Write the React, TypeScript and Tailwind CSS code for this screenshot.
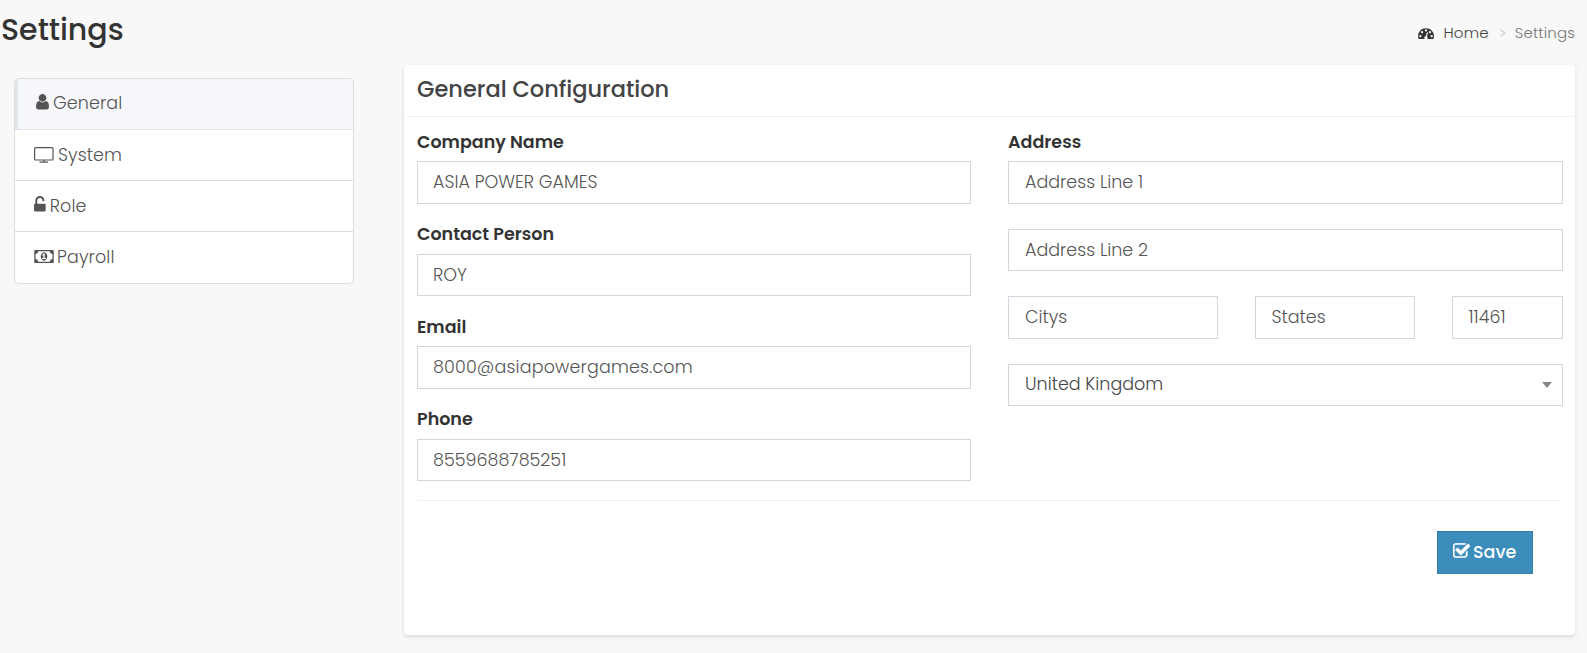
import type { ReactNode } from "react";

function Glyph({ d, vb, className }: { d: string; vb: string; className: string }) {
  return (
    <svg viewBox={vb} className={className} fill="currentColor" aria-hidden="true">
      <path d={d} />
    </svg>
  );
}

const USER =
  "M1536 1399q0 109-62.5 187t-150.5 78h-854q-88 0-150.5-78t-62.5-187q0-85 8.5-160.5t31.5-152 58.5-131 94-89 134.5-34.5q131 128 313 128t313-128q76 0 134.5 34.5t94 89 58.5 131 31.5 152 8.5 160.5zm-256-887q0 159-112.5 271.5t-271.5 112.5-271.5-112.5-112.5-271.5 112.5-271.5 271.5-112.5 271.5 112.5 112.5 271.5z";
const UNLOCK =
  "M1376 768q40 0 68 28t28 68v576q0 40-28 68t-68 28h-960q-40 0-68-28t-28-68v-576q0-40 28-68t68-28h32v-320q0-185 131.5-316.5t316.5-131.5 316.5 131.5 131.5 316.5q0 26-19 45t-45 19h-64q-26 0-45-19t-19-45q0-106-75-181t-181-75-181 75-75 181v320h736z";
const MONEY =
  "M768 1152h384v-96h-128v-448h-114l-148 137 77 80q42-37 55-57h2v288h-128v96zm512-256q0 70-21 142t-59.5 134-101.5 101-138 39-138-39-101.5-101-59.5-134-21-142 21-142 59.5-134 101.5-101 138-39 138 39 101.5 101 59.5 134 21 142zm512 256v-512q-106 0-181-75t-75-181h-1152q0 106-75 181t-181 75v512q106 0 181 75t75 181h1152q0-106 75-181t181-75zm128-832v1152q0 26-19 45t-45 19h-1792q-26 0-45-19t-19-45v-1152q0-26 19-45t45-19h1792q26 0 45 19t19 45z";
const CHECK =
  "M1472 930v318q0 119-84.5 203.5t-203.5 84.5h-832q-119 0-203.5-84.5t-84.5-203.5v-832q0-119 84.5-203.5t203.5-84.5h832q63 0 117 25 15 7 18 23 3 17-9 29l-49 49q-10 10-23 10-3 0-9-2-23-6-45-6h-832q-66 0-113 47t-47 113v832q0 66 47 113t113 47h832q66 0 113-47t47-113v-254q0-13 9-22l64-64q10-10 23-10 6 0 12 3 20 8 20 29zm231-489l-814 814q-24 24-57 24t-57-24l-430-430q-24-24-24-57t24-57l110-110q24-24 57-24t57 24l263 263 647-647q24-24 57-24t57 24l110 110q24 24 24 57t-24 57z";
const GAUGE =
  "M384 1152q0-53-37.5-90.5t-90.5-37.5-90.5 37.5-37.5 90.5 37.5 90.5 90.5 37.5 90.5-37.5 37.5-90.5zm192-448q0-53-37.5-90.5t-90.5-37.5-90.5 37.5-37.5 90.5 37.5 90.5 90.5 37.5 90.5-37.5 37.5-90.5zm428 481l101-382q6-26-7.5-48.5t-38.5-29.5-48 6.5-30 39.5l-101 382q-60 5-107 43.5t-63 98.5q-20 77 20 146t117 89 146-20 89-117q16-60-6-117t-72-91zm660-33q0-53-37.5-90.5t-90.5-37.5-90.5 37.5-37.5 90.5 37.5 90.5 90.5 37.5 90.5-37.5 37.5-90.5zm-640-640q0-53-37.5-90.5t-90.5-37.5-90.5 37.5-37.5 90.5 37.5 90.5 90.5 37.5 90.5-37.5 37.5-90.5zm448 192q0-53-37.5-90.5t-90.5-37.5-90.5 37.5-37.5 90.5 37.5 90.5 90.5 37.5 90.5-37.5 37.5-90.5zm320 448q0 261-141 483-19 29-54 29h-1402q-35 0-54-29-141-221-141-483 0-182 71-348t191-286 286-191 348-71 348 71 286 191 191 286 71 348z";

function MonitorIcon() {
  return (
    <svg viewBox="0 0 20 16" className="mr-1 h-4 w-5 shrink-0" fill="none" stroke="currentColor" aria-hidden="true">
      <rect x="0.6" y="0.6" width="18.4" height="12.4" rx="1" strokeWidth="1.2" />
      <path d="M9.8 13v2M5.5 15.2h8.6" strokeWidth="1.2" />
    </svg>
  );
}

function NavItem({ icon, label }: { icon: ReactNode; label: string }) {
  return (
    <a className="flex h-[51px] items-center border-b border-[#ddd] pl-[19px] last:border-b-0 last:pb-[2px]">
      {icon}
      <span className="tracking-[0.1px]">{label}</span>
    </a>
  );
}

function Box({ text, className = "pl-[15px]" }: { text: string; className?: string }) {
  return (
    <div className={`flex h-[42.5px] items-center border border-[#d2d6de] bg-white ${className}`}>
      <span>{text}</span>
    </div>
  );
}

function Label({ text }: { text: string }) {
  return <div className="mb-[7.5px] h-6 leading-6 font-semibold text-[#333]">{text}</div>;
}

function Field({ label, value, className }: { label: string; value: string; className?: string }) {
  return (
    <div className="mb-[18.5px]">
      <Label text={label} />
      <Box text={value} className={className} />
    </div>
  );
}

export default function App() {
  return (
    <div className="h-[653px] w-[1587px] overflow-hidden bg-[#f8f8f8] font-['Poppins','Inter',sans-serif] text-[17.5px] leading-6 font-light whitespace-nowrap text-[#555]">
      <header className="flex h-[65px] items-start justify-between pr-3">
        <h1 className="mt-3 pl-px text-[30px] leading-9 font-medium text-[#333]">Settings</h1>
        <nav className="mt-[21px] flex h-6 items-center text-[15px] text-[#777]">
          <Glyph d={GAUGE} vb="0 128 1792 1408" className="mr-[9px] h-[12.5px] w-4 text-[#333]" />
          <span className="tracking-[0.2px] text-[#444]">Home</span>
          <svg viewBox="0 0 6 8" className="mr-[9px] ml-[11px] h-2 w-1.5" fill="none" stroke="#ccc" strokeWidth="1.3">
            <path d="M0.8 0.8 4.8 4 0.8 7.2" />
          </svg>
          <span className="tracking-[0.12px]">Settings</span>
        </nav>
      </header>

      <div className="flex items-start">
        <aside className="mt-[13px] ml-[14px] w-[340px] overflow-hidden rounded-[5px] border border-[#ddd] bg-white">
          <a className="-mx-px -mt-px flex h-[52px] items-center rounded-t-[5px] border border-l-4 border-[#e2e5ee] bg-[#f5f7fb] pb-[2px] pl-[18px]">
            <Glyph d={USER} vb="256 128 1280 1536" className="mr-1 mb-[2px] h-[15.5px] w-[13px] shrink-0" />
            <span className="tracking-[0.1px]">General</span>
          </a>
          <NavItem icon={<MonitorIcon />} label="System" />
          <NavItem
            icon={<Glyph d={UNLOCK} vb="320 0 1152 1536" className="mr-[4px] mb-[4px] h-[15.5px] w-[11.7px] shrink-0" />}
            label="Role"
          />
          <NavItem
            icon={<Glyph d={MONEY} vb="0 256 1920 1280" className="mr-[3px] h-[13px] w-5 shrink-0" />}
            label="Payroll"
          />
        </aside>

        <main className="ml-[50px] h-[570px] w-[1171px] rounded-[4px] bg-white shadow-[0_2px_4px_rgba(0,0,0,0.12)]">
          <h2 className="h-[52px] border-b border-[#f4f4f4] pt-[6px] pl-[13px] text-[22.5px] leading-9 font-medium text-[#444]">
            General Configuration
          </h2>
          <div className="pt-[12.5px] pr-3 pl-[13px]">
            <div className="flex h-[371.5px] gap-[37px] border-b border-[#f4f4f4]">
              <section className="w-[554px]">
                <Field label="Company Name" value="ASIA POWER GAMES" />
                <Field label="Contact Person" value="ROY" />
                <Field label="Email" value="8000@asiapowergames.com" className="pl-[15px] tracking-[0.15px]" />
                <Field label="Phone" value="8559688785251" />
              </section>
              <section className="w-[555px]">
                <Label text="Address" />
                <Box text="Address Line 1" className="mb-[25px] pl-4" />
                <Box text="Address Line 2" className="mb-[25px] pl-4" />
                <div className="mb-[25px] flex gap-[37px]">
                  <Box text="Citys" className="w-[210px] pl-4" />
                  <Box text="States" className="w-[160px] pl-[15.5px]" />
                  <Box text="11461" className="w-[111px] pl-[15.5px]" />
                </div>
                <div className="flex h-[42.5px] items-center justify-between border border-[#d2d6de] pr-[10px] pb-[2px] pl-4 text-[#444]">
                  <span>United Kingdom</span>
                  <svg viewBox="0 0 10 6" className="mt-0.5 h-1.5 w-2.5" fill="#888">
                    <path d="M0 0h10L5 6z" />
                  </svg>
                </div>
              </section>
            </div>
            <div className="flex justify-end pt-[30px] pr-[30px]">
              <button className="flex h-[43px] w-[96px] items-center border border-[#367fa9] bg-[#3c8dbc] pb-[2px] pl-[15px] font-medium text-white">
                <Glyph
                  d={CHECK}
                  vb="64 128 1664 1408"
                  className="mr-[3px] mb-[2px] h-[15px] w-[17px] shrink-0 stroke-current stroke-[50]"
                />
                <span>Save</span>
              </button>
            </div>
          </div>
        </main>
      </div>
    </div>
  );
}
